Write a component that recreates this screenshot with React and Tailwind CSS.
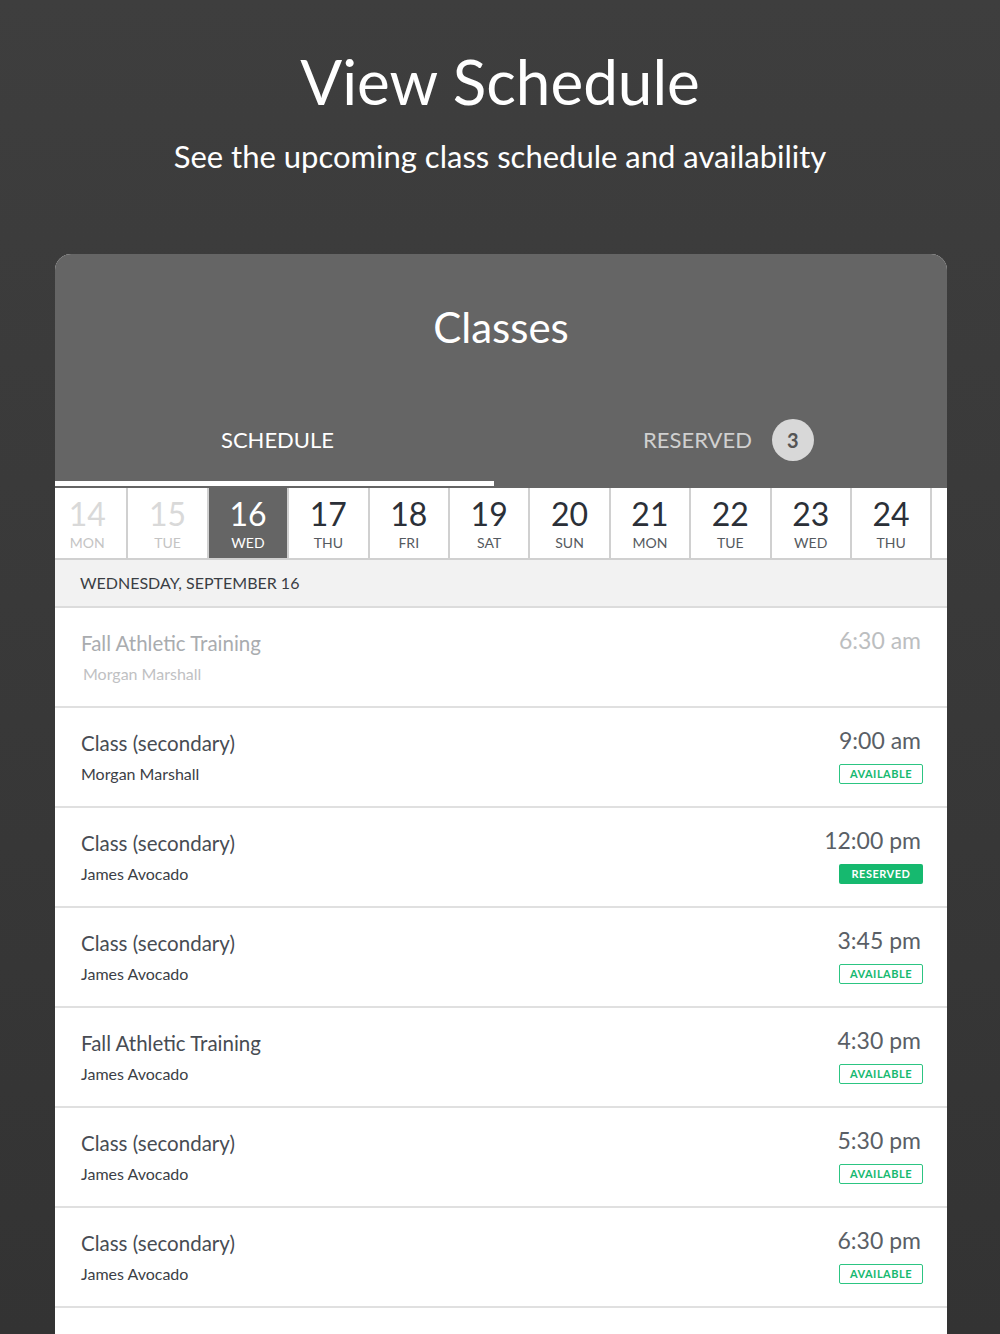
import React from 'react';

const days = [
    { num: 14, label: 'MON', past: true },
    { num: 15, label: 'TUE', past: true },
    { num: 16, label: 'WED', active: true },
    { num: 17, label: 'THU' },
    { num: 18, label: 'FRI' },
    { num: 19, label: 'SAT' },
    { num: 20, label: 'SUN' },
    { num: 21, label: 'MON' },
    { num: 22, label: 'TUE' },
    { num: 23, label: 'WED' },
    { num: 24, label: 'THU' },
];

const classes = [
    { title: 'Fall Athletic Training', coach: 'Morgan Marshall', time: '6:30 am', past: true },
    { title: 'Class (secondary)', coach: 'Morgan Marshall', time: '9:00 am', status: 'available' },
    { title: 'Class (secondary)', coach: 'James Avocado', time: '12:00 pm', status: 'reserved' },
    { title: 'Class (secondary)', coach: 'James Avocado', time: '3:45 pm', status: 'available' },
    { title: 'Fall Athletic Training', coach: 'James Avocado', time: '4:30 pm', status: 'available' },
    { title: 'Class (secondary)', coach: 'James Avocado', time: '5:30 pm', status: 'available' },
    { title: 'Class (secondary)', coach: 'James Avocado', time: '6:30 pm', status: 'available' },
];

const DayCell = ({ day }) => {
    let numColor = 'text-[#2b3038]';
    let labelColor = 'text-[#555a60]';
    let bg = 'bg-white';
    if (day.past) {
        numColor = 'text-[#d9d9d9]';
        labelColor = 'text-[#c4c4c4]';
    }
    if (day.active) {
        numColor = 'text-white';
        labelColor = 'text-white';
        bg = 'bg-[#656565]';
    }
    return (
        <div className={`w-[80.4px] shrink-0 h-full flex flex-col items-center border-r-2 border-[#d0d0d0] ${bg}`}>
            <span className={`text-[32px] leading-none mt-[10px] ${numColor}`}>{day.num}</span>
            <span className={`text-[14px] leading-none mt-[6px] ${labelColor}`}>{day.label}</span>
        </div>
    );
};

const Badge = ({ status }) => {
    if (status === 'reserved') {
        return (
            <span className="mt-[9px] mr-[-2px] w-[84px] h-[20px] rounded-[2px] bg-[#16b96f] text-white text-[11px] font-bold tracking-[0.5px] flex items-center justify-center">
                RESERVED
            </span>
        );
    }
    return (
        <span className="mt-[9px] mr-[-2px] w-[84px] h-[20px] rounded-[2px] border-[1.5px] border-[#2cc582] text-[#16b96f] text-[11px] font-bold tracking-[0.5px] flex items-center justify-center">
            AVAILABLE
        </span>
    );
};

const ClassRow = ({ item }) => (
    <div className="h-[100px] flex justify-between border-b-2 border-[#e0e0e0] bg-white pl-[26px] pr-[26px]">
        <div className="flex flex-col pt-[22px]">
            <span className={`text-[20.5px] leading-[26px] ${item.past ? 'text-[#a9acaf]' : 'text-[#474c53]'}`}>{item.title}</span>
            <span className={`text-[16px] leading-[20px] mt-[8px] ${item.past ? 'text-[#bfc1c3] ml-[2px]' : 'text-[#3c4046]'}`}>{item.coach}</span>
        </div>
        <div className="flex flex-col items-end pt-[17px]">
            <span className={`text-[23px] leading-[30px] ${item.past ? 'text-[#bcbec0]' : 'text-[#5a5f66]'}`}>{item.time}</span>
            {item.status && <Badge status={item.status} />}
        </div>
    </div>
);

const App = () => {
    return (
        <div className="w-[1000px] h-[1334px] overflow-hidden bg-gradient-to-b from-[#3e3e3e] to-[#333333] font-['Lato','Open_Sans',sans-serif] flex flex-col items-center">
            <h1 className="text-[62px] leading-none text-white font-normal mt-[50px]">View Schedule</h1>
            <p className="text-[31px] leading-none text-white mt-[29px]">See the upcoming class schedule and availability</p>

            <div className="mt-[82px] ml-[2px] w-[892px] flex-1 rounded-t-[16px] overflow-hidden bg-[#f4f4f4] flex flex-col">
                <div className="bg-[#656565] flex flex-col">
                    <h2 className="text-[42px] leading-none text-white text-center mt-[52px]">Classes</h2>
                    <div className="flex mt-[66px] h-[72px]">
                        <div className="w-[439px] flex flex-col">
                            <div className="flex-1 flex items-center justify-center text-white text-[22px] pb-[17px] pl-[6px]">SCHEDULE</div>
                            <div className="h-[5px] bg-white"></div>
                        </div>
                        <div className="flex-1 flex items-start justify-center gap-[20px] pt-[5px]">
                            <span className="text-[#d0d0d0] text-[22px] leading-[42px] ml-[16px]">RESERVED</span>
                            <span className="w-[42px] h-[42px] rounded-full bg-[#d8d8d8] text-[#555] text-[20px] font-bold flex items-center justify-center">3</span>
                        </div>
                    </div>
                    <div className="h-[2px]"></div>
                </div>

                <div className="h-[72px] bg-white border-b-2 border-[#d0d0d0] overflow-hidden flex">
                    <div className="flex h-full ml-[-7px]">
                        {days.map((d) => (
                            <DayCell key={d.num} day={d} />
                        ))}
                    </div>
                </div>

                <div className="h-[48px] bg-[#f2f2f2] border-b-2 border-[#dcdcdc] flex items-center pl-[25px] text-[16px] text-[#3a3e44]">
                    WEDNESDAY, SEPTEMBER 16
                </div>

                <div className="flex flex-col bg-white flex-1">
                    {classes.map((c, i) => (
                        <ClassRow key={i} item={c} />
                    ))}
                </div>
            </div>
        </div>
    );
};

export default App;
